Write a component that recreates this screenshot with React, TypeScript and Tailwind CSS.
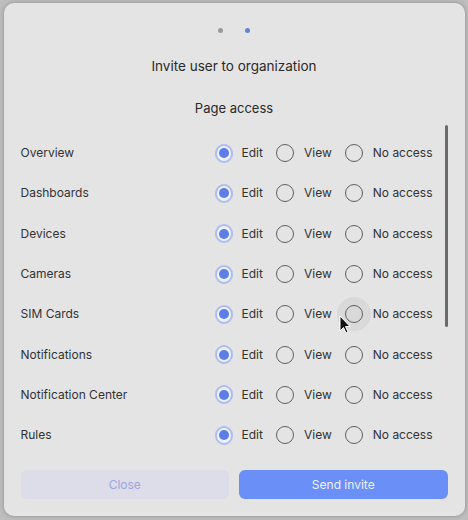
import React from "react";

const rows = [
  "Overview",
  "Dashboards",
  "Devices",
  "Cameras",
  "SIM Cards",
  "Notifications",
  "Notification Center",
  "Rules",
];

function Radio({ checked, hover }: { checked?: boolean; hover?: boolean }) {
  return (
    <span className="relative flex h-[18px] w-[18px] items-center justify-center">
      {hover && (
        <span className="absolute left-1/2 top-1/2 h-[34px] w-[34px] -translate-x-1/2 -translate-y-1/2 rounded-full bg-[#d9d9d9]" />
      )}
      {checked ? (
        <span className="relative flex h-[19px] w-[19px] items-center justify-center rounded-full border-[2.5px] border-[#aebcf2] bg-[#eef0fa]">
          <span className="h-[10px] w-[10px] rounded-full bg-[#5c7ee9]" />
        </span>
      ) : (
        <span className="relative h-[18px] w-[18px] rounded-full border-[1.5px] border-[#5f5f5f]" />
      )}
    </span>
  );
}

export default function App() {
  return (
    <div
      className="flex h-[520px] w-[468px] items-start justify-center bg-[#bdbdbd] p-[3px]"
      style={{ fontFamily: "Inter, 'Noto Sans', sans-serif" }}
    >
      <div className="relative flex h-[513px] w-[461px] flex-col rounded-[10px] bg-[#e4e4e4] px-[17px] shadow-[0_0_4px_rgba(0,0,0,0.25)]">
        <div className="flex h-[54px] items-center justify-center gap-[22px]">
          <span className="h-[5px] w-[5px] rounded-full bg-[#9a9a9a]" />
          <span className="h-[5px] w-[5px] rounded-full bg-[#6a7fd6]" />
        </div>
        <div className="-mt-[1px] flex h-[20px] items-center justify-center text-[13.5px] text-[#2a2a2a]">
          Invite user to organization
        </div>
        <div className="mt-[23px] flex h-[20px] items-center justify-center text-[13px] text-[#2a2a2a]">
          Page access
        </div>
        <div className="mt-[14px] flex flex-col">
          {rows.map((r, i) => (
            <div
              key={r}
              className="flex h-[40.3px] items-center justify-between pr-[15px] text-[12px] text-[#333333]"
            >
              <span>{r}</span>
              <div className="flex items-center">
                <Radio checked />
                <span className="ml-[9px] mr-[13px]">Edit</span>
                <Radio />
                <span className="ml-[10px] mr-[13px]">View</span>
                <Radio hover={i === 4} />
                <span className="ml-[10px]">No access</span>
              </div>
            </div>
          ))}
        </div>
        <div className="absolute right-[17px] top-[122px] h-[202px] w-[3px] rounded-full bg-[#6a6a6a]" />
        <div className="mt-[15px] flex gap-[10px]">
          <button className="flex h-[29px] flex-1 items-center justify-center rounded-[6px] bg-[#dcdde8] text-[12px] text-[#9aa6dc]">
            Close
          </button>
          <button className="flex h-[29px] flex-1 items-center justify-center rounded-[6px] bg-[#6a8ff6] text-[12px] text-[#eef1ff]">
            Send invite
          </button>
        </div>
        <svg
          className="absolute left-[335px] top-[312px]"
          width="12"
          height="20"
          viewBox="0 0 12 20"
        >
          <path d="M1 1 L1 16 L4.5 12.5 L7 18 L9 17 L6.5 11.5 L11 11.5 Z" fill="#111" stroke="#fff" strokeWidth="1" />
        </svg>
      </div>
    </div>
  );
}
